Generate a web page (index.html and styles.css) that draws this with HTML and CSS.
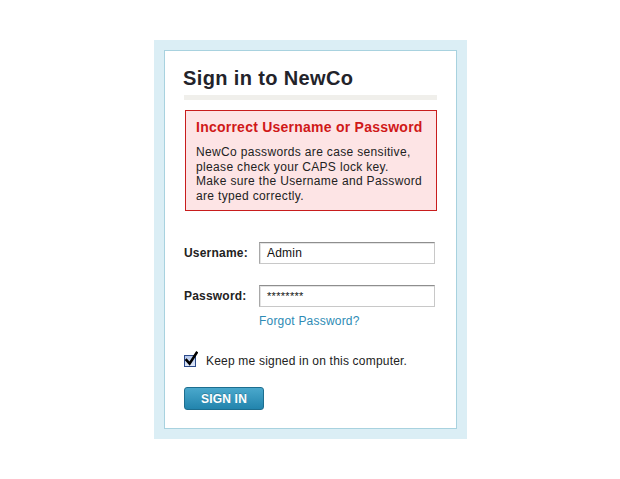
FILE: index.html
```html
<!DOCTYPE html>
<html>
<head>
<meta charset="utf-8">
<link rel="stylesheet" href="styles.css">
</head>
<body>
<div class="frame">
  <div class="card">
    <h1 class="title">Sign in to NewCo</h1>
    <div class="rule"></div>
    <div class="error">
      <div class="error-title">Incorrect Username or Password</div>
      <p class="error-text">NewCo passwords are case sensitive,<br>please check your CAPS lock key.<br>Make sure the Username and Password<br>are typed correctly.</p>
    </div>
    <div class="field field-user">
      <label class="label">Username:</label>
      <div class="input">Admin</div>
    </div>
    <div class="field field-pass">
      <label class="label">Password:</label>
      <div class="input input-pass">********</div>
    </div>
    <a class="forgot">Forgot Password?</a>
    <div class="remember">
      <span class="checkbox">
        <svg width="14" height="16" viewBox="0 0 14 16"><path d="M2.5 9.2 L5.6 12.6 L12.6 1.8" fill="none" stroke="#000" stroke-width="2.6" stroke-linejoin="miter" stroke-linecap="square"/></svg>
      </span>
      <span class="remember-text">Keep me signed in on this computer.</span>
    </div>
    <button class="btn">SIGN IN</button>
  </div>
</div>
</body>
</html>
```
FILE: styles.css
```css
html, body {
  margin: 0;
  padding: 0;
  background: #fff;
}
body {
  font-family: "Liberation Sans", Arial, Helvetica, sans-serif;
  color: #222;
}
.frame {
  margin: 40px 0 0 154px;
  width: 293px;
  height: 379px;
  padding: 10px;
  background: #dbeef5;
}
.card {
  box-sizing: border-box;
  height: 379px;
  background: #fff;
  border: 1px solid #a8d2df;
  padding: 15px 19px 0 19px;
  display: flex;
  flex-direction: column;
  align-items: flex-start;
}
.title {
  margin: 0 0 0 -1px;
  font-size: 20px;
  line-height: 24px;
  font-weight: bold;
  letter-spacing: 0.37px;
  color: #23232a;
}
.rule {
  align-self: stretch;
  height: 5px;
  margin-top: 5px;
  background: #f0efeb;
}
.error {
  box-sizing: border-box;
  align-self: stretch;
  margin: 10px 0 0 1px;
  height: 101px;
  border: 1px solid #c81d1d;
  background: #fde4e5;
  padding: 8px 10px 0 10px;
}
.error-title {
  font-size: 14px;
  line-height: 17px;
  font-weight: bold;
  letter-spacing: 0.24px;
  color: #d01818;
}
.error-text {
  margin: 9px 0 0 0;
  font-size: 12px;
  line-height: 14.6px;
  letter-spacing: 0.34px;
  color: #222;
}
.field {
  display: flex;
  align-items: center;
  align-self: stretch;
}
.field-user { margin-top: 31px; }
.field-pass { margin-top: 21px; }
.label {
  width: 75px;
  font-size: 12px;
  font-weight: bold;
  letter-spacing: 0.2px;
  color: #222;
}
.input {
  box-sizing: border-box;
  width: 176px;
  height: 22px;
  border: 1px solid #c8c8c8;
  border-top-color: #8e8e8e;
  border-left-color: #a8a8a8;
  box-shadow: inset 1px 1px 0 #e4e4e4;
  padding: 0 7px;
  font-size: 12px;
  line-height: 20px;
  letter-spacing: 0.2px;
  color: #111;
}
.input-pass {
  font-size: 11px;
  letter-spacing: 0.3px;
}
.forgot {
  margin: 7px 0 0 75px;
  font-size: 12px;
  line-height: 14px;
  letter-spacing: 0.2px;
  color: #2e8bb5;
  text-decoration: none;
}
.remember {
  display: flex;
  align-items: center;
  margin-top: 26px;
}
.checkbox {
  position: relative;
  box-sizing: border-box;
  width: 12px;
  height: 12px;
  border: 1px solid #2c4a8a;
  background: linear-gradient(#b5c8ec, #dfe8f8);
  margin-right: 10px;
}
.checkbox svg {
  position: absolute;
  left: -1px;
  top: -5px;
}
.remember-text {
  font-size: 12px;
  line-height: 14px;
  letter-spacing: 0.2px;
  color: #222;
}
.btn {
  margin-top: 19px;
  width: 80px;
  height: 23px;
  border: 1px solid #1d6e8f;
  border-radius: 3px;
  background: linear-gradient(#4aa8cc, #2284ad);
  color: #fff;
  font-family: "Liberation Sans", Arial, sans-serif;
  font-weight: bold;
  font-size: 12px;
  letter-spacing: 0.2px;
  padding: 0;
  text-shadow: 0 -1px 0 rgba(0,0,0,0.2);
}
```
